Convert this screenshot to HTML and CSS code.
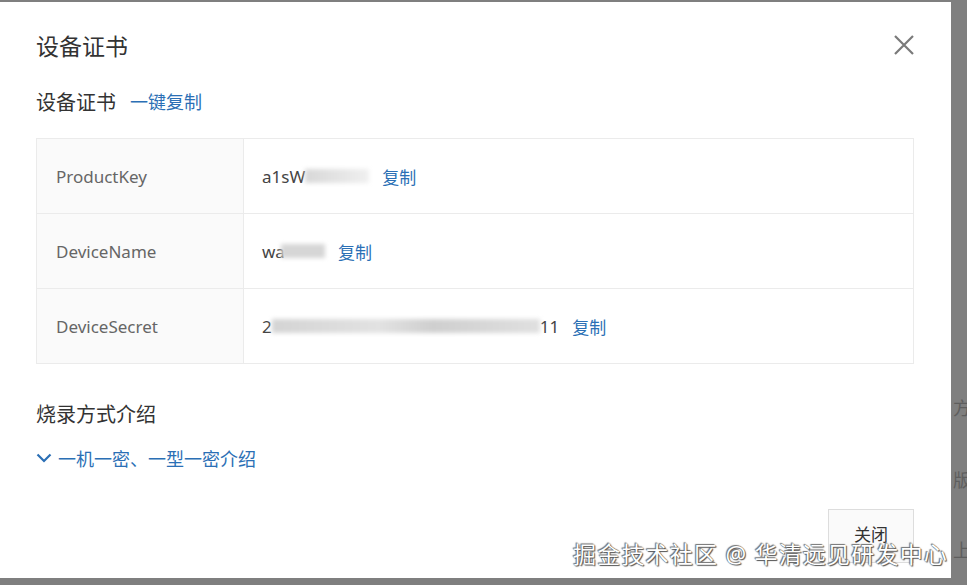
FILE: index.html
```html
<!DOCTYPE html>
<html lang="zh-CN">
  <head>
    <meta charset="UTF-8" />
    <meta name="viewport" content="width=device-width, initial-scale=1.0" />
    <title>设备证书</title>
    <link rel="stylesheet" href="styles.css">
  </head>
  <body>
    <div class="screen">
      <div class="dialog">
        <div class="dialog-header">
          <h2>设备证书</h2>
          <button class="close-btn" aria-label="关闭">
            <svg width="22" height="22" viewBox="0 0 22 22">
              <path d="M2 2 L20 20 M20 2 L2 20" stroke="#7a7a7a" stroke-width="2.2" fill="none" />
            </svg>
          </button>
        </div>

        <div class="sub-title">
          <span>设备证书</span>
          <a class="link">一键复制</a>
        </div>

        <!-- certificate table -->
        <div class="cert-table">
          <div class="cert-row">
            <div class="cert-label">ProductKey</div>
            <div class="cert-value">
              <span>a1sW</span><span class="blur blur-pk"></span>
              <a class="link copy">复制</a>
            </div>
          </div>
          <div class="cert-row">
            <div class="cert-label">DeviceName</div>
            <div class="cert-value">
              <span>wa</span><span class="blur blur-dn"></span>
              <a class="link copy">复制</a>
            </div>
          </div>
          <div class="cert-row">
            <div class="cert-label">DeviceSecret</div>
            <div class="cert-value">
              <span>2</span><span class="blur blur-ds"></span><span>11</span>
              <a class="link copy">复制</a>
            </div>
          </div>
        </div>

        <h3 class="section-title">烧录方式介绍</h3>
        <a class="link toggle">
          <svg width="16" height="10" viewBox="0 0 16 10">
            <path d="M1.5 1.5 L8 8 L14.5 1.5" stroke="#2b6fb5" stroke-width="2.2" fill="none" />
          </svg>
          一机一密、一型一密介绍
        </a>

        <div class="dialog-footer">
          <button class="btn">关闭</button>
        </div>
      </div>

      <div class="behind">
        <span class="behind-a">方</span>
        <span class="behind-b">版</span>
        <span class="behind-c">上</span>
      </div>

      <div class="watermark">掘金技术社区 @ 华清远见研发中心</div>
    </div>
  </body>
</html>
```

FILE: styles.css
```css
body {
  margin: 0;
  background: #7f7f7f;
  font-family: "Noto Sans", "Noto Sans CJK SC", sans-serif;
  color: #333;
}
.screen {
  position: relative;
  display: flex;
  width: 967px;
  height: 585px;
  overflow: hidden;
}
.dialog {
  flex-shrink: 0;
  margin-top: 2px;
  width: 951px;
  height: 576px;
  box-sizing: border-box;
  padding: 0 37px 0 36px;
  background: #fff;
  overflow: hidden;
}
.dialog-header {
  display: flex;
  justify-content: space-between;
  align-items: center;
  height: 32px;
  margin-top: 27px;
}
.dialog-header h2 {
  margin: 0;
  font-size: 23px;
  font-weight: normal;
  color: #333;
}
.close-btn {
  background: none;
  border: none;
  padding: 0;
  margin-right: -1px;
  width: 22px;
  height: 22px;
  cursor: pointer;
}
.link {
  color: #2b6fb5;
  cursor: pointer;
}
.sub-title {
  display: flex;
  align-items: center;
  gap: 14px;
  height: 28px;
  margin-top: 26px;
  font-size: 20px;
}
.sub-title .link {
  font-size: 18px;
}

/* table */
.cert-table {
  margin-top: 23px;
  border: 1px solid #ebebeb;
}
.cert-row {
  display: flex;
  height: 74px;
  border-top: 1px solid #ebebeb;
}
.cert-row:first-child {
  border-top: none;
}
.cert-label {
  width: 187px;
  padding-left: 19px;
  display: flex;
  align-items: center;
  background: #fafafa;
  border-right: 1px solid #ebebeb;
  color: #666;
  font-size: 17px;
}
.cert-value {
  display: flex;
  align-items: center;
  padding-left: 18px;
  font-size: 17px;
  color: #444;
}
.blur {
  display: inline-block;
  height: 14px;
  background: #d6d6d6;
  filter: blur(2px);
}
.blur-pk {
  width: 64px;
  background: linear-gradient(90deg, #d8d8d8, #e6e6e6 60%, #f0f0f0);
}
.blur-dn {
  width: 44px;
  margin-left: -4px;
}
.blur-ds {
  width: 268px;
  background: linear-gradient(90deg, #d4d4d4, #e2e2e2 40%, #cfcfcf 60%, #e0e0e0);
}
.copy {
  margin-left: 13px;
}

.section-title {
  margin: 37px 0 0;
  height: 28px;
  line-height: 28px;
  font-size: 20px;
  font-weight: normal;
  color: #333;
}
.toggle {
  display: flex;
  align-items: center;
  gap: 6px;
  margin-top: 16px;
  height: 26px;
  font-size: 18px;
}
.dialog-footer {
  display: flex;
  justify-content: flex-end;
  margin-top: 38px;
}
.btn {
  width: 86px;
  height: 54px;
  padding-bottom: 6px;
  background: #fafafa;
  border: 1px solid #ddd;
  font-family: inherit;
  font-size: 17px;
  color: #333;
}

/* page behind the mask */
.behind {
  flex: 1;
  min-width: 0;
  overflow: hidden;
  display: flex;
  flex-direction: column;
  padding-top: 395px;
  padding-left: 2px;
  color: #5e5e5e;
  font-size: 18px;
  line-height: 26px;
}
.behind-b {
  margin-top: 46px;
}
.behind-c {
  margin-top: 44px;
}

.watermark {
  position: absolute;
  left: 573px;
  top: 536px;
  font-size: 23px;
  letter-spacing: 1.2px;
  color: #fff;
  text-shadow: 0 0 1px #444, 1px 1px 1px #555, -1px -1px 1px #777;
  white-space: nowrap;
}
```
